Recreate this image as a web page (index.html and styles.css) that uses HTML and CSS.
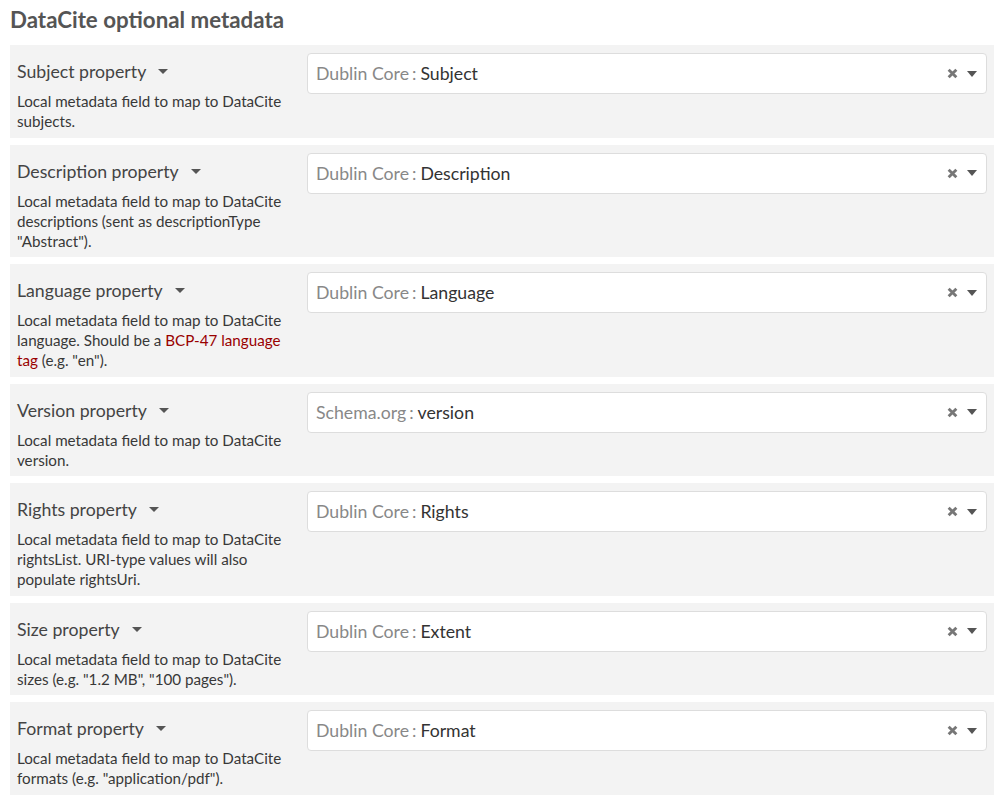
FILE: index.html
```html
<!DOCTYPE html>
<html>
<head>
<meta charset="utf-8">
<link rel="stylesheet" href="styles.css">
</head>
<body>
<h2 class="title">DataCite optional metadata</h2>
<div class="rows">
  <div class="row">
    <div class="info">
      <div class="label">Subject property <span class="caret"></span></div>
      <div class="desc">Local metadata field to map to DataCite subjects.</div>
    </div>
    <div class="select"><span class="vocab">Dublin Core</span><span class="sep">:</span><span class="term">Subject</span><span class="icons"><svg class="clear" viewBox="0 0 10 10"><path d="M1.5 1.5L8.5 8.5M8.5 1.5L1.5 8.5"/></svg><span class="arrow"></span></span></div>
  </div>
  <div class="row">
    <div class="info">
      <div class="label">Description property <span class="caret"></span></div>
      <div class="desc">Local metadata field to map to DataCite descriptions (sent as descriptionType "Abstract").</div>
    </div>
    <div class="select"><span class="vocab">Dublin Core</span><span class="sep">:</span><span class="term">Description</span><span class="icons"><svg class="clear" viewBox="0 0 10 10"><path d="M1.5 1.5L8.5 8.5M8.5 1.5L1.5 8.5"/></svg><span class="arrow"></span></span></div>
  </div>
  <div class="row">
    <div class="info">
      <div class="label">Language property <span class="caret"></span></div>
      <div class="desc">Local metadata field to map to DataCite language. Should be a <a href="#">BCP-47 language tag</a> (e.g. "en").</div>
    </div>
    <div class="select"><span class="vocab">Dublin Core</span><span class="sep">:</span><span class="term">Language</span><span class="icons"><svg class="clear" viewBox="0 0 10 10"><path d="M1.5 1.5L8.5 8.5M8.5 1.5L1.5 8.5"/></svg><span class="arrow"></span></span></div>
  </div>
  <div class="row">
    <div class="info">
      <div class="label">Version property <span class="caret"></span></div>
      <div class="desc">Local metadata field to map to DataCite version.</div>
    </div>
    <div class="select"><span class="vocab">Schema.org</span><span class="sep">:</span><span class="term">version</span><span class="icons"><svg class="clear" viewBox="0 0 10 10"><path d="M1.5 1.5L8.5 8.5M8.5 1.5L1.5 8.5"/></svg><span class="arrow"></span></span></div>
  </div>
  <div class="row">
    <div class="info">
      <div class="label">Rights property <span class="caret"></span></div>
      <div class="desc">Local metadata field to map to DataCite rightsList. URI-type values will also populate rightsUri.</div>
    </div>
    <div class="select"><span class="vocab">Dublin Core</span><span class="sep">:</span><span class="term">Rights</span><span class="icons"><svg class="clear" viewBox="0 0 10 10"><path d="M1.5 1.5L8.5 8.5M8.5 1.5L1.5 8.5"/></svg><span class="arrow"></span></span></div>
  </div>
  <div class="row">
    <div class="info">
      <div class="label">Size property <span class="caret"></span></div>
      <div class="desc">Local metadata field to map to DataCite sizes (e.g. "1.2 MB", "100 pages").</div>
    </div>
    <div class="select"><span class="vocab">Dublin Core</span><span class="sep">:</span><span class="term">Extent</span><span class="icons"><svg class="clear" viewBox="0 0 10 10"><path d="M1.5 1.5L8.5 8.5M8.5 1.5L1.5 8.5"/></svg><span class="arrow"></span></span></div>
  </div>
  <div class="row">
    <div class="info">
      <div class="label">Format property <span class="caret"></span></div>
      <div class="desc">Local metadata field to map to DataCite formats (e.g. "application/pdf").</div>
    </div>
    <div class="select"><span class="vocab">Dublin Core</span><span class="sep">:</span><span class="term">Format</span><span class="icons"><svg class="clear" viewBox="0 0 10 10"><path d="M1.5 1.5L8.5 8.5M8.5 1.5L1.5 8.5"/></svg><span class="arrow"></span></span></div>
  </div>
</div>
</body>
</html>
```
FILE: styles.css
```css
html, body {
  margin: 0;
  padding: 0;
  background: #fff;
}
body {
  font-family: Lato, "Open Sans", sans-serif;
  color: #333;
  padding: 0 6px 0 10px;
}
.title {
  margin: 0;
  padding-top: 6px;
  font-size: 22.3px;
  font-weight: bold;
  color: #555;
  line-height: 27px;
  height: 39px;
}
.rows {
  display: flex;
  flex-direction: column;
  gap: 7px;
}
.row {
  background: #f3f3f3;
  display: grid;
  grid-template-columns: 283px 1fr;
  column-gap: 7px;
  padding: 8px 7px 6.5px 7px;
  min-height: 77.5px;
}
.label {
  font-size: 17.7px;
  line-height: 24px;
  color: #444;
  padding-top: 7px;
}
.caret {
  display: inline-block;
  width: 0;
  height: 0;
  margin-left: 8px;
  vertical-align: middle;
  border-left: 5px solid transparent;
  border-right: 5px solid transparent;
  border-top: 5px solid #555;
  position: relative;
  top: -2px;
}
.desc {
  font-size: 15.2px;
  line-height: 20px;
  color: #383838;
  margin-top: 7px;
}
.desc a {
  color: #990000;
  text-decoration: none;
}
.select {
  align-self: start;
  height: 41px;
  box-sizing: border-box;
  background: #fff;
  border: 1px solid #ddd;
  border-radius: 4px;
  display: flex;
  align-items: center;
  padding: 0 9px 0 8px;
  font-size: 17.7px;
}
.vocab {
  color: #888;
}
.sep {
  color: #888;
  margin: 0 4px 0 3px;
}
.term {
  color: #333;
  flex: 1;
}
.icons {
  display: flex;
  align-items: center;
  gap: 9px;
}
.clear {
  width: 11px;
  height: 11px;
  fill: none;
  stroke: #777;
  stroke-width: 2.6;
}
.arrow {
  width: 0;
  height: 0;
  border-left: 5px solid transparent;
  border-right: 5px solid transparent;
  border-top: 6px solid #555;
}
```
